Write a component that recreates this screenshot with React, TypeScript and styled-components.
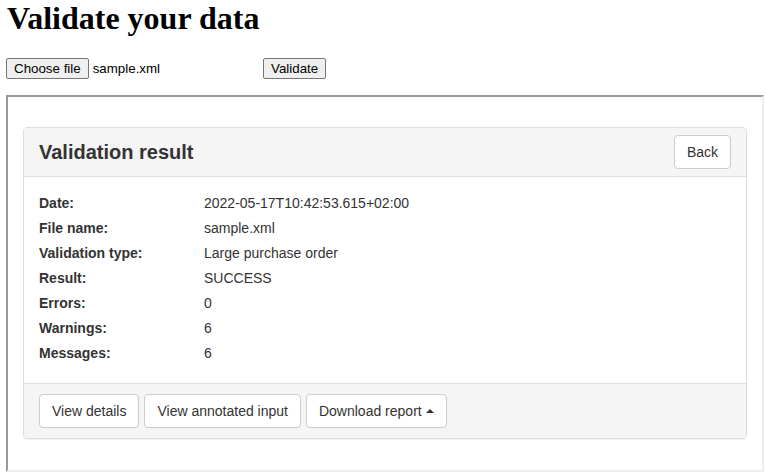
import { FC } from 'react';
import styled, { createGlobalStyle } from 'styled-components';

const GlobalStyle = createGlobalStyle`
	html, body {
		margin: 0;
		padding: 0;
		background: #fff;
	}
	body {
		padding: 0 6px;
		font-family: "Liberation Serif", "Times New Roman", serif;
		color: #000;
	}
`;

const PageTitle = styled.h1`
	font-family: "Liberation Serif", "Times New Roman", serif;
	font-size: 32px;
	font-weight: bold;
	line-height: 37px;
	margin: 0 0 21px 1px;
`;

const UploadForm = styled.form`
	display: flex;
	align-items: center;
	height: 21px;
	margin: 0 0 16px;
`;

const FileField = styled.div`
	display: flex;
	align-items: center;
	gap: 4px;
	width: 257px;
`;

const NativeButton = styled.button`
	font-family: "Liberation Sans", Arial, sans-serif;
	font-size: 13.33px;
	height: 21px;
	padding: 0 7px;
	color: #000;
	background: #efefef;
	border: 1px solid #767676;
	border-radius: 2px;
	line-height: 19px;
`;

const FileName = styled.span`
	font-family: "Liberation Sans", Arial, sans-serif;
	font-size: 13.33px;
	color: #000;
`;

const Frame = styled.div`
	box-sizing: border-box;
	width: 758px;
	height: 377px;
	border-style: solid;
	border-width: 2px;
	border-color: #9a9a9a #eeeeee #eeeeee #9a9a9a;
	padding: 30px 15px 0;
	font-family: "Liberation Sans", Helvetica, Arial, sans-serif;
	font-size: 14px;
	color: #333;
`;

const Panel = styled.div`
	border: 1px solid #dddddd;
	border-radius: 4px;
	box-shadow: 0 1px 1px rgba(0, 0, 0, 0.05);
	overflow: hidden;
`;

const PanelHeading = styled.div`
	display: flex;
	align-items: center;
	justify-content: space-between;
	padding: 7px 15px;
	background: #f5f5f5;
	border-bottom: 1px solid #dddddd;
`;

const PanelTitle = styled.h3`
	margin: 0;
	font-size: 20px;
	font-weight: bold;
	line-height: 24px;
	color: #333;
`;

const PanelBody = styled.div`
	padding: 16px 15px 15px;
`;

const InfoRow = styled.div`
	display: grid;
	grid-template-columns: 165px 1fr;
	line-height: 20px;
	margin-bottom: 5px;
`;

const InfoLabel = styled.span`
	font-weight: bold;
`;

const PanelFooter = styled.div`
	display: flex;
	gap: 5px;
	padding: 10px 15px;
	background: #f5f5f5;
	border-top: 1px solid #dddddd;
`;

const Button = styled.button`
	display: inline-flex;
	align-items: center;
	gap: 4px;
	box-sizing: border-box;
	height: 34px;
	padding: 6px 12px;
	font-family: "Liberation Sans", Helvetica, Arial, sans-serif;
	font-size: 14px;
	line-height: 20px;
	color: #333;
	background: #fff;
	border: 1px solid #cccccc;
	border-radius: 4px;
`;

const Caret = styled.span`
	display: inline-block;
	width: 0;
	height: 0;
	border-left: 4px solid transparent;
	border-right: 4px solid transparent;
	border-bottom: 4px solid #333;
	margin-top: -1px;
`;

const rows: [string, string][] = [
	['Date:', '2022-05-17T10:42:53.615+02:00'],
	['File name:', 'sample.xml'],
	['Validation type:', 'Large purchase order'],
	['Result:', 'SUCCESS'],
	['Errors:', '0'],
	['Warnings:', '6'],
	['Messages:', '6']
];

const App: FC = () => {
	return (
		<>
			<GlobalStyle />
			<PageTitle>Validate your data</PageTitle>
			<UploadForm onSubmit={(e) => e.preventDefault()}>
				<FileField>
					<NativeButton type="button">Choose file</NativeButton>
					<FileName>sample.xml</FileName>
				</FileField>
				<NativeButton type="submit">Validate</NativeButton>
			</UploadForm>
			<Frame>
				<Panel>
					<PanelHeading>
						<PanelTitle>Validation result</PanelTitle>
						<Button type="button">Back</Button>
					</PanelHeading>
					<PanelBody>
						{rows.map(([label, value]) => (
							<InfoRow key={label}>
								<InfoLabel>{label}</InfoLabel>
								<span>{value}</span>
							</InfoRow>
						))}
					</PanelBody>
					<PanelFooter>
						<Button type="button">View details</Button>
						<Button type="button">View annotated input</Button>
						<Button type="button">
							Download report<Caret />
						</Button>
					</PanelFooter>
				</Panel>
			</Frame>
		</>
	);
};

export default App;
